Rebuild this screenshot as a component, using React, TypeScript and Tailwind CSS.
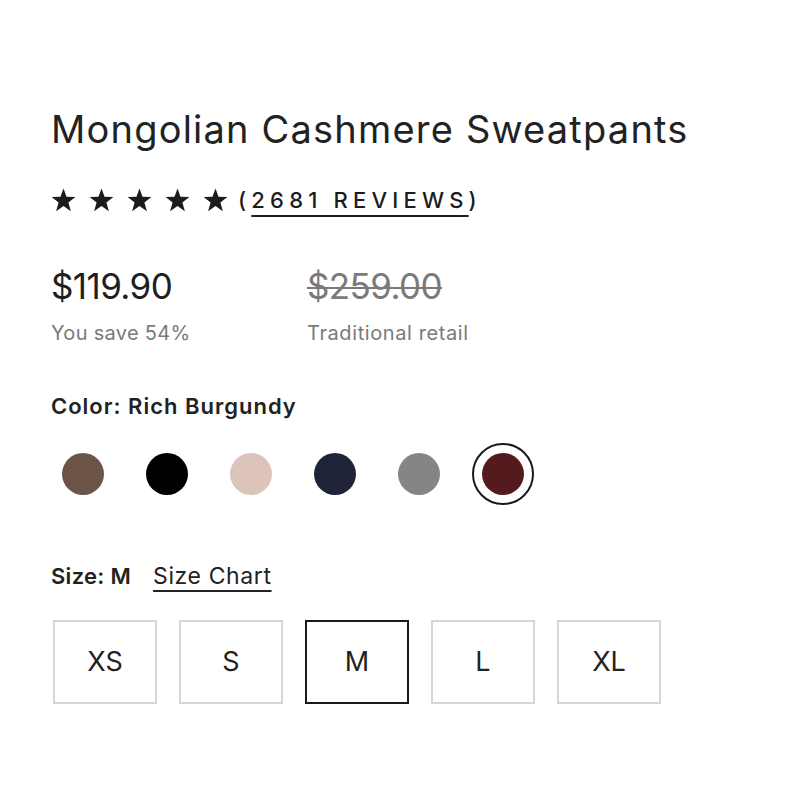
import React from "react";

const swatches = [
  { name: "Mocha", color: "#6b5446" },
  { name: "Black", color: "#000000" },
  { name: "Blush", color: "#dcc4ba" },
  { name: "Navy", color: "#1f2338" },
  { name: "Grey", color: "#858585" },
  { name: "Rich Burgundy", color: "#541a1e" },
];

const sizes = ["XS", "S", "M", "L", "XL"];

function Star() {
  return (
    <svg width="25" height="24" viewBox="0 0 24 23" aria-hidden="true">
      <polygon
        points="12,0.5 14.9,8.4 23.4,8.6 16.7,13.9 19.1,22.2 12,17.3 4.9,22.2 7.3,13.9 0.6,8.6 9.1,8.4"
        fill="#1c1c1c"
      />
    </svg>
  );
}

export default function App() {
  const selectedColor = "Rich Burgundy";
  const selectedSize = "M";
  return (
    <div
      className="min-h-[800px] w-[800px] bg-white text-[#222222]"
      style={{ fontFamily: "Inter, 'Liberation Sans', sans-serif" }}
    >
      <div className="flex flex-col pl-[51px] pt-[106px]">
        <h1 className="text-[38px] leading-[46px] font-normal tracking-[1.2px]">
          Mongolian Cashmere Sweatpants
        </h1>

        <div className="mt-[34px] flex h-[28px] items-center">
          <div className="flex items-center gap-[13px]">
            <Star />
            <Star />
            <Star />
            <Star />
            <Star />
          </div>
          <span className="ml-[10px] text-[22px] leading-[28px] font-medium tracking-[5.2px] text-[#1c1c1c]">
            (
            <span className="underline decoration-[2px] underline-offset-[7px]">
              2681 REVIEWS
            </span>
            )
          </span>
        </div>

        <div className="mt-[51px] flex">
          <div className="w-[256px]">
            <div className="text-[35px] leading-[42px] tracking-[-0.6px] text-[#1e1e1e]">
              $119.90
            </div>
            <div className="mt-[14px] text-[20px] leading-[24px] tracking-[0.3px] text-[#7a7a7a]">
              You save 54%
            </div>
          </div>
          <div>
            <div className="text-[35px] leading-[42px] tracking-[-0.6px] text-[#7a7a7a] line-through decoration-[2px]">
              $259.00
            </div>
            <div className="mt-[14px] text-[20px] leading-[24px] tracking-[0.6px] text-[#7a7a7a]">
              Traditional retail
            </div>
          </div>
        </div>

        <div className="mt-[49px] text-[22px] leading-[24px] font-semibold tracking-[1px] text-[#222222]">
          Color: {selectedColor}
        </div>

        <div className="mt-[25px] flex items-center gap-[22px] pl-[1px]">
          {swatches.map((s) => (
            <div
              key={s.name}
              className={
                s.name === selectedColor
                  ? "flex h-[62px] w-[62px] items-center justify-center rounded-full border-[2px] border-[#1a1a1a]"
                  : "flex h-[62px] w-[62px] items-center justify-center rounded-full"
              }
            >
              <div
                className="h-[42px] w-[42px] rounded-full"
                style={{ backgroundColor: s.color }}
              />
            </div>
          ))}
        </div>

        <div className="mt-[58px] flex items-center text-[22px] leading-[26px]">
          <span className="font-semibold tracking-[0.3px]">Size: {selectedSize}</span>
          <span className="ml-[22px] text-[23px] tracking-[0.6px] underline decoration-[2px] underline-offset-[6px]">
            Size Chart
          </span>
        </div>

        <div className="mt-[31px] flex gap-[22px] pl-[2px]">
          {sizes.map((sz) => (
            <div
              key={sz}
              className={
                sz === selectedSize
                  ? "flex h-[84px] w-[104px] items-center justify-center border-[2px] border-[#1a1a1a] text-[27px]"
                  : "flex h-[84px] w-[104px] items-center justify-center border-[2px] border-[#d6d6d6] text-[27px]"
              }
            >
              {sz}
            </div>
          ))}
        </div>
      </div>
    </div>
  );
}
